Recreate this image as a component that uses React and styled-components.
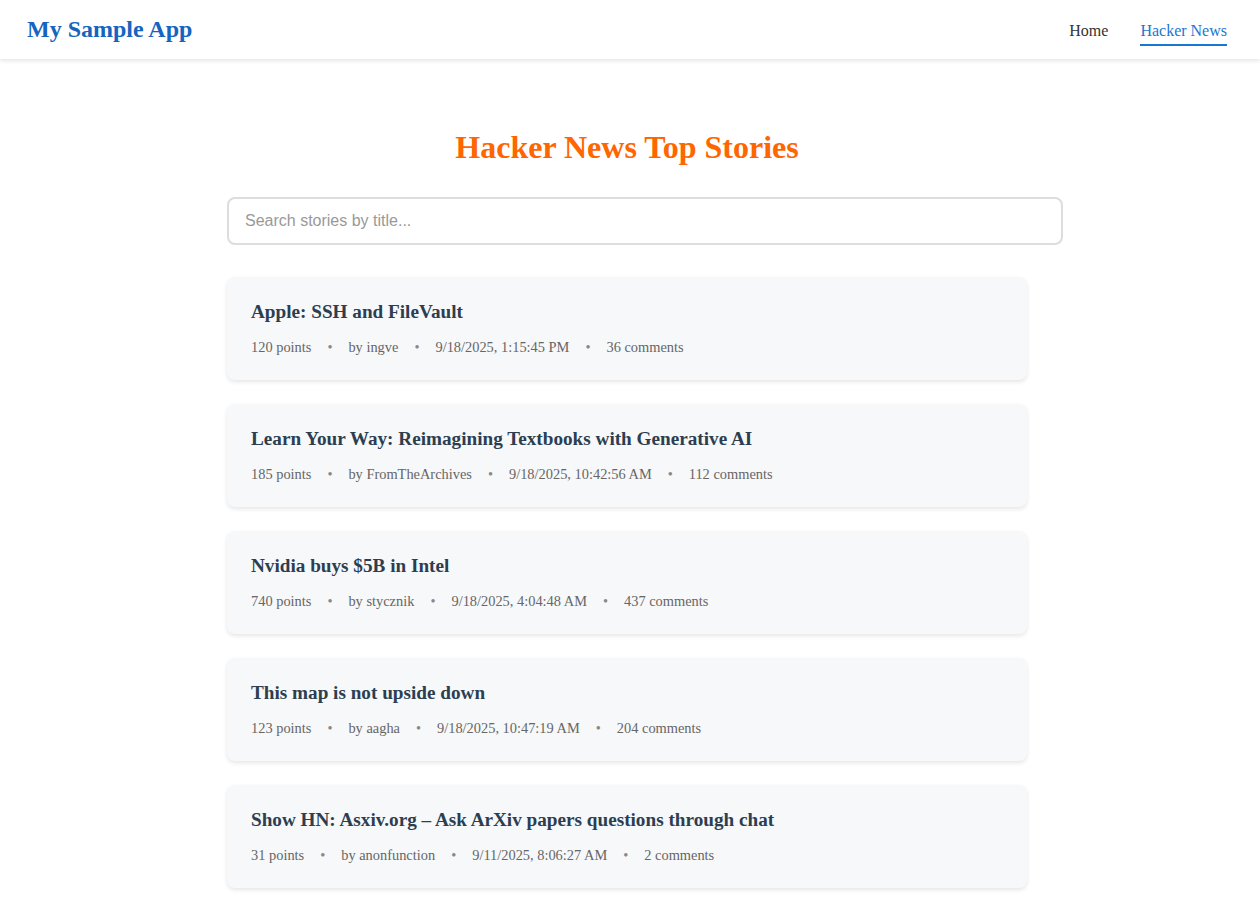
import styled, { createGlobalStyle } from 'styled-components'

const stories = [
  { title: 'Apple: SSH and FileVault', points: 120, by: 'ingve', time: '9/18/2025, 1:15:45 PM', comments: 36 },
  { title: 'Learn Your Way: Reimagining Textbooks with Generative AI', points: 185, by: 'FromTheArchives', time: '9/18/2025, 10:42:56 AM', comments: 112 },
  { title: 'Nvidia buys $5B in Intel', points: 740, by: 'stycznik', time: '9/18/2025, 4:04:48 AM', comments: 437 },
  { title: 'This map is not upside down', points: 123, by: 'aagha', time: '9/18/2025, 10:47:19 AM', comments: 204 },
  { title: 'Show HN: Asxiv.org – Ask ArXiv papers questions through chat', points: 31, by: 'anonfunction', time: '9/11/2025, 8:06:27 AM', comments: 2 },
]

export default function App() {
  return (
    <>
      <GlobalStyle />
      <Header>
        <Logo>My Sample App</Logo>
        <Nav>
          <NavLink>Home</NavLink>
          <NavLink active>Hacker News</NavLink>
        </Nav>
      </Header>
      <Main>
        <Title>Hacker News Top Stories</Title>
        <Search placeholder="Search stories by title..." />
        <List>
          {stories.map((s) => (
            <Card key={s.title}>
              <StoryTitle>{s.title}</StoryTitle>
              <Meta>
                <span>{s.points} points</span>
                <Dot>•</Dot>
                <span>by {s.by}</span>
                <Dot>•</Dot>
                <span>{s.time}</span>
                <Dot>•</Dot>
                <span>{s.comments} comments</span>
              </Meta>
            </Card>
          ))}
        </List>
      </Main>
    </>
  )
}

const GlobalStyle = createGlobalStyle`
  body {
    margin: 0;
    background: #fff;
    font-family: 'Liberation Serif', 'Times New Roman', serif;
  }
`

const Header = styled.header`
  height: 59px;
  display: flex;
  align-items: center;
  justify-content: space-between;
  padding: 0 33px 0 27px;
  background: #fff;
  box-shadow: 0 2px 4px rgba(0, 0, 0, 0.1);
`

const Logo = styled.div`
  color: #1565c0;
  font-size: 24px;
  font-weight: bold;
`

const Nav = styled.nav`
  display: flex;
  gap: 32px;
  padding-top: 9px;
`

const NavLink = styled.a`
  font-size: 16px;
  line-height: 18px;
  color: ${(props) => (props.active ? '#1976d2' : '#333')};
  padding-bottom: 4px;
  border-bottom: 2px solid ${(props) => (props.active ? '#1976d2' : 'transparent')};
  cursor: pointer;
`

const Main = styled.main`
  width: 800px;
  margin: 0 auto;
  padding: 70px 0 40px;
  position: relative;
  left: -3px;
`

const Title = styled.h1`
  margin: 0 0 31px;
  text-align: center;
  color: #ff6600;
  font-size: 32px;
  line-height: 37px;
`

const Search = styled.input`
  display: block;
  width: 100%;
  padding: 13px 16px;
  font-size: 16px;
  font-family: 'Liberation Sans', Arial, sans-serif;
  border: 2px solid #ddd;
  border-radius: 8px;
  outline: none;

  &::placeholder {
    color: #999;
  }
`

const List = styled.div`
  margin-top: 32px;
  display: flex;
  flex-direction: column;
  gap: 24px;
`

const Card = styled.div`
  background: #f7f8fa;
  border-radius: 8px;
  padding: 24px;
  box-shadow: 0 2px 4px rgba(0, 0, 0, 0.1);
`

const StoryTitle = styled.h3`
  margin: 0 0 15px;
  color: #2c3e50;
  font-size: 1.2rem;
  line-height: 22px;
`

const Meta = styled.div`
  font-size: 0.9rem;
  line-height: 18px;
  color: #666;
  display: flex;
  align-items: center;
`

const Dot = styled.span`
  margin: 0 16px;
  color: #888;
`
